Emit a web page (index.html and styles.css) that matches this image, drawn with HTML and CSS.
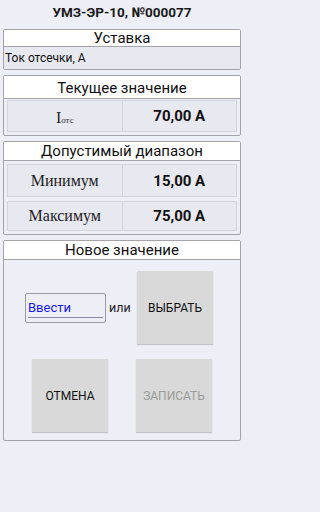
FILE: index.html
```html
<!DOCTYPE html>
<html lang="ru">
<head>
<meta charset="utf-8">
<link rel="stylesheet" href="styles.css">
</head>
<body>
<div class="title">УМЗ-ЭР-10, №000077</div>

<section class="box b1">
  <div class="hdr h1">Уставка</div>
  <div class="param">Ток отсечки, А</div>
</section>

<section class="box b2">
  <div class="hdr h2">Текущее значение</div>
  <div class="cells">
    <div class="row r-cur">
      <div class="cell lbl">I<span class="sub">отс</span></div>
      <div class="cell val">70,00 А</div>
    </div>
  </div>
</section>

<section class="box b3">
  <div class="hdr h3">Допустимый диапазон</div>
  <div class="cells">
    <div class="row r-min">
      <div class="cell lbl">Минимум</div>
      <div class="cell val">15,00 А</div>
    </div>
    <div class="row r-max">
      <div class="cell lbl">Максимум</div>
      <div class="cell val">75,00 А</div>
    </div>
  </div>
</section>

<section class="box b4">
  <div class="hdr h4">Новое значение</div>
  <div class="newbody">
    <div class="line1">
      <div class="input"><span class="inp-text">Ввести</span></div>
      <span class="or">или</span>
      <div class="btn btn-pick">ВЫБРАТЬ</div>
    </div>
    <div class="line2">
      <div class="btn btn-cancel">ОТМЕНА</div>
      <div class="btn btn-write">ЗАПИСАТЬ</div>
    </div>
  </div>
</section>
</body>
</html>
```

FILE: styles.css
```css
html, body {
  margin: 0;
  padding: 0;
  background: #eeeef6;
}
body {
  font-family: Roboto, "Liberation Sans", sans-serif;
  color: #111;
  width: 244px;
  height: 512px;
  overflow: hidden;
}
.title {
  height: 24px;
  line-height: 25px;
  text-align: center;
  font-weight: bold;
  font-size: 13.5px;
  color: #1a1a1a;
}
.box {
  margin: 5px 3px 0 3px;
  border: 1px solid #a4a4a8;
  border-radius: 2px;
  background: #eeeef6;
  box-sizing: border-box;
}
.hdr {
  background: #fff;
  border-bottom: 1px solid #a4a4a8;
  text-align: center;
  font-size: 15px;
  color: #111;
  box-sizing: border-box;
}
.h1 { height: 17px; line-height: 16px; }
.h2 { height: 23px; line-height: 24px; }
.h3 { height: 19px; line-height: 19px; }
.h4 { height: 19px; line-height: 19px; }
.param {
  background: #e8e8f0;
  height: 22px;
  line-height: 22px;
  font-size: 12px;
  padding-left: 1px;
  color: #111;
}
.cells {
  padding: 1px 3px 3px 3px;
  display: flex;
  flex-direction: column;
  gap: 4px;
}
.row {
  display: flex;
  height: 32px;
}
.r-min { height: 33px; margin-top: 2px; }
.r-max { height: 30px; }
.cell {
  flex: 1;
  background: #e8e8f0;
  border: 1px solid #d4d4dc;
  display: flex;
  align-items: center;
  justify-content: center;
  box-sizing: border-box;
}
.cell + .cell { border-left: none; }
.lbl {
  font-family: "Liberation Serif", "DejaVu Serif", serif;
  font-size: 16px;
  color: #222;
}
.r-cur .lbl { align-items: baseline; padding-top: 8px; }
.val {
  font-weight: bold;
  font-size: 15px;
  color: #111;
}
.sub {
  font-size: 9px;
  color: #333;
}
.newbody {
  height: 180px;
}
.line1 {
  display: flex;
  align-items: center;
  padding-top: 11px;
  padding-left: 21px;
}
.input {
  width: 81px;
  height: 30px;
  border: 1px solid #9a9aa0;
  border-radius: 2px;
  box-sizing: border-box;
  padding: 6px 2px 0 2px;
}
.inp-text {
  display: block;
  color: #1a1ae6;
  font-size: 13px;
  line-height: 15px;
  border-bottom: 1px solid #8a8aa0;
  padding-bottom: 2px;
}
.or {
  font-size: 12.5px;
  color: #222;
  margin-left: 3px;
  width: 28px;
}
.btn {
  width: 76px;
  height: 73px;
  background: #d8d9d8;
  display: flex;
  align-items: center;
  justify-content: center;
  font-size: 12px;
  color: #111;
  box-shadow: 0 1px 1px rgba(0,0,0,0.18);
}
.line2 {
  display: flex;
  padding-left: 28px;
  gap: 28px;
  margin-top: 15px;
}
.btn-write { color: #9a9a9a; }
```
